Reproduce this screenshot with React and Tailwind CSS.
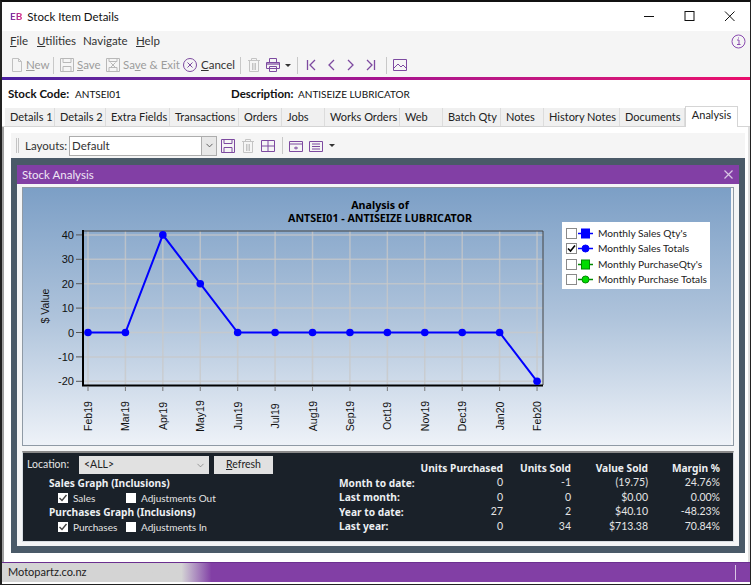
import { ChevronDown } from 'lucide-react';

const tabs = [
  ['Details 1', 'w-[50px]'],
  ['Details 2', 'w-[51px]'],
  ['Extra Fields', 'w-[64px]'],
  ['Transactions', 'w-[69px]'],
  ['Orders', 'w-[43px]'],
  ['Jobs', 'w-[43px]'],
  ['Works Orders', 'w-[75px]'],
  ['Web', 'w-[43px]'],
  ['Batch Qty', 'w-[58px]'],
  ['Notes', 'w-[43px]'],
  ['History Notes', 'w-[76px]'],
  ['Documents', 'w-[65px]'],
];

const months = ['Feb19', 'Mar19', 'Apr19', 'May19', 'Jun19', 'Jul19', 'Aug19', 'Sep19', 'Oct19', 'Nov19', 'Dec19', 'Jan20', 'Feb20'];
const values = [0, 0, 40, 20, 0, 0, 0, 0, 0, 0, 0, 0, -20];

const stats = [
  ['Month to date:', '0', '-1', '(19.75)', '24.76%'],
  ['Last month:', '0', '0', '$0.00', '0.00%'],
  ['Year to date:', '27', '2', '$40.10', '-48.23%'],
  ['Last year:', '0', '34', '$713.38', '70.84%'],
];

const legend = [
  ['Monthly Sales Qty\'s', '#0000ff', 'square', false],
  ['Monthly Sales Totals', '#0000ff', 'circle', true],
  ['Monthly PurchaseQty\'s', '#00dd00', 'square', false],
  ['Monthly Purchase Totals', '#00dd00', 'circle', false],
];

function Icon({ children, className = '', color = '#b5b5b5', w = 16, h = 16 }) {
  return (
    <svg width={w} height={h} viewBox="0 0 16 16" fill="none" stroke={color} strokeWidth="1" className={className}>
      {children}
    </svg>
  );
}

function Sep() {
  return <div className="mx-[3px] h-[17px] w-px bg-[#c8c8c8]" />;
}

function SaveGlyph({ color }) {
  return (
    <Icon color={color}>
      <path d="M1.5 1.5h13v13h-13z" />
      <path d="M4 1.5v4h8v-4M4 14.5v-5h8v5" />
    </Icon>
  );
}

function TrashGlyph({ color = '#c4c4c4' }) {
  return (
    <Icon color={color}>
      <path d="M2 3.5h12M5.5 3V1.5h5V3M3.5 4v10.5h9V4M6.5 6v7M8 6v7M9.5 6v7" />
    </Icon>
  );
}

function Toolbar() {
  const grey = 'whitespace-nowrap text-[#9c9c9c]';
  return (
    <div className="flex h-[26px] items-center pl-[7px] pt-[2px] text-[11.5px]">
      <Icon color="#c0c0c0">
        <path d="M3.5 1.5h6l3 3v10h-9zM9.5 1.5v3h3" />
      </Icon>
      <span className={`ml-[1px] w-[22px] ${grey}`}><u>N</u>ew</span>
      <div className="ml-[2px]"><Sep /></div>
      <div className="ml-[2px]"><SaveGlyph color="#b8b8b8" /></div>
      <span className={`ml-[2px] w-[23px] ${grey}`}><u>S</u>ave</span>
      <div className="ml-[5px]">
        <Icon color="#b8b8b8">
          <path d="M1.5 1.5h13v13h-13z" />
          <path d="M4 1.5v3h8v-3M4 14.5v-4h8v4M5.5 5.5l5 5M10.5 5.5l-5 5" />
        </Icon>
      </div>
      <span className={`ml-[2px] w-[54px] ${grey}`}>Sa<u>v</u>e &amp; Exit</span>
      <div className="ml-[5px]">
        <Icon color="#7d4aa0">
          <circle cx="8" cy="8" r="6.5" />
          <path d="M5.5 5.5l5 5M10.5 5.5l-5 5" />
        </Icon>
      </div>
      <span className="ml-[3px] w-[33px] text-[#333]"><u>C</u>ancel</span>
      <div className="ml-[3px]"><Sep /></div>
      <div className="ml-[2px]"><TrashGlyph /></div>
      <div className="ml-[3px]">
        <Icon color="#7d4aa0">
          <path d="M4.5 5V1.5h7V5M1.5 5.5h13v6h-13zM4.5 9.5h7v5h-7z" fill="#f5f5f5" />
          <path d="M2 6h12v2H2z" fill="#a98abf" stroke="none" />
        </Icon>
      </div>
      <span className="ml-[4px] h-0 w-0 border-x-[3px] border-t-[3px] border-x-transparent border-t-[#333]" />
      <div className="ml-[3px]"><Sep /></div>
      <div className="ml-[2px] flex items-center gap-[4px]">
        <Icon color="#7d4aa0"><path d="M4.5 3v10M12 3L7 8l5 5" strokeWidth="1.3" /></Icon>
        <Icon color="#7d4aa0"><path d="M11 3L6 8l5 5" strokeWidth="1.3" /></Icon>
        <Icon color="#7d4aa0"><path d="M5 3l5 5-5 5" strokeWidth="1.3" /></Icon>
        <Icon color="#7d4aa0"><path d="M11.5 3v10M4 3l5 5-5 5" strokeWidth="1.3" /></Icon>
      </div>
      <div className="ml-[4px]"><Sep /></div>
      <div className="ml-[2px]">
        <Icon color="#7d4aa0">
          <path d="M1.5 2.5h13v11h-13z" />
          <path d="M2 11l4-4 3 3 2-2 3 3" />
        </Icon>
      </div>
    </div>
  );
}

function Chart() {
  const xAt = (i) => 65 + i * 37.42;
  const yAt = (v) => 144.5 - v * 2.44;
  const pts = values.map((v, i) => `${xAt(i)},${yAt(v)}`).join(' ');
  return (
    <svg width="708" height="257" viewBox="0 0 708 257" className="block">
      <defs>
        <linearGradient id="bg" x1="0" y1="0" x2="0" y2="1">
          <stop offset="0" stopColor="#7c9fc6" />
          <stop offset="0.5" stopColor="#aec3db" />
          <stop offset="1" stopColor="#eef2f8" />
        </linearGradient>
      </defs>
      <rect width="708" height="257" fill="url(#bg)" />
      <g fontFamily="'Noto Sans', sans-serif" fontSize="10.7" fontWeight="700" fill="#000" textAnchor="middle">
        <text x="357" y="21">Analysis of</text>
        <text x="357" y="34">ANTSEI01 - ANTISEIZE LUBRICATOR</text>
      </g>
      {months.map((m, i) => (
        <line key={m} x1={xAt(i)} x2={xAt(i)} y1="43" y2="197" stroke="#c8c8c8" strokeOpacity="0.75" strokeWidth="1.5" />
      ))}
      {[40, 30, 20, 10, 0, -10, -20].map((v) => (
        <g key={v}>
          <line x1="60" x2="520" y1={yAt(v)} y2={yAt(v)} stroke="#c8c8c8" strokeOpacity="0.75" strokeWidth="1.5" />
          <line x1="53" x2="60" y1={yAt(v)} y2={yAt(v)} stroke="#555" />
          <text x="51" y={yAt(v) + 4} fontFamily="'Liberation Sans', sans-serif" fontSize="11" textAnchor="end" fill="#111">{v}</text>
        </g>
      ))}
      <path d="M60 43H520V197" fill="none" stroke="#444" strokeWidth="1" />
      <path d="M60 42V197.5H520" fill="none" stroke="#000" strokeWidth="2" />
      {months.map((m, i) => (
        <g key={m}>
          <line x1={xAt(i)} x2={xAt(i)} y1="198" y2="203" stroke="#777" />
          <text
            transform={`translate(${xAt(i) + 4} 228) rotate(-90)`}
            fontFamily="'Liberation Sans', sans-serif"
            fontSize="10.5"
            textAnchor="middle"
            fill="#111"
          >
            {m}
          </text>
        </g>
      ))}
      <text transform="translate(26 118) rotate(-90)" fontFamily="'Liberation Sans', sans-serif" fontSize="10.5" textAnchor="middle" fill="#111">$ Value</text>
      <polyline points={pts} fill="none" stroke="#0000ff" strokeWidth="2" />
      {values.map((v, i) => (
        <circle key={i} cx={xAt(i)} cy={yAt(v)} r="3.8" fill="#0000ff" />
      ))}
    </svg>
  );
}

function Legend() {
  return (
    <div className="absolute left-[539px] top-[34px] flex h-[67px] w-[148px] flex-col justify-center gap-[1.5px] bg-white pl-[4px] pt-[2px] text-[10.2px] text-[#222]">
      {legend.map(([label, color, shape, checked]) => (
        <div key={label} className="flex h-[14px] items-center">
          <span className="flex h-[11px] w-[11px] shrink-0 items-center justify-center border border-[#8a8a8a] bg-white">
            {checked && (
              <svg width="9" height="9" viewBox="0 0 9 9" fill="none" stroke="#000" strokeWidth="1.6">
                <path d="M1 4.5l2.5 2.5L8 1.5" />
              </svg>
            )}
          </span>
          <svg width="15" height="11" viewBox="0 0 15 11" className="ml-[1px] shrink-0">
            <line x1="0" x2="15" y1="5.5" y2="5.5" stroke={color === '#00dd00' ? '#008800' : color} strokeWidth="1.5" />
            {shape === 'square' ? (
              <rect x="3.5" y="1" width="8" height="9" fill={color} stroke={color === '#00dd00' ? '#008800' : color} />
            ) : (
              <circle cx="7.5" cy="5.5" r="3.5" fill={color} stroke={color === '#00dd00' ? '#008800' : color} />
            )}
          </svg>
          <span className="ml-[5px] whitespace-nowrap">{label}</span>
        </div>
      ))}
    </div>
  );
}

function DarkCheck({ checked, label, className = '' }) {
  return (
    <div className={`flex items-center ${className}`}>
      <span className="flex h-[10px] w-[10px] shrink-0 items-center justify-center bg-white">
        {checked && (
          <svg width="10" height="10" viewBox="0 0 10 10" fill="none" stroke="#444" strokeWidth="1.4">
            <path d="M1.5 5l2.5 2.5L8.5 2" />
          </svg>
        )}
      </span>
      <span className="ml-[5px] whitespace-nowrap text-[10px] text-[#e4e4e4]">{label}</span>
    </div>
  );
}

function BottomPanel() {
  const bold = "font-['Noto_Sans',sans-serif] text-[10.2px] font-bold text-[#eceff2] whitespace-nowrap";
  return (
    <div className="mt-[5px] flex h-[91px] border border-t-2 border-[#d8dde2] border-t-[#8a8a8a] bg-[#1a2129]">
      <div className="w-[316px] shrink-0 pl-[4px] pt-[3px]">
        <div className="flex h-[18px] items-center">
          <span className="w-[52px] text-[10.5px] text-[#e4e4e4]">Location:</span>
          <div className="flex h-[18px] w-[130px] items-center justify-between bg-[#e1e1e1] pl-[5px] pr-[3px] text-[10.5px] text-[#222]">
            <span>&lt;ALL&gt;</span>
            <ChevronDown size={11} strokeWidth={1} color="#444" />
          </div>
          <button className="ml-[5px] h-[18px] w-[59px] bg-[#e1e1e1] text-[10.5px] text-[#222]"><u>R</u>efresh</button>
        </div>
        <div className={`ml-[22px] mt-[2px] h-[15px] leading-[15px] ${bold}`}>Sales Graph (Inclusions)</div>
        <div className="ml-[31px] flex h-[14px] items-center">
          <DarkCheck checked label="Sales" className="w-[68px]" />
          <DarkCheck label="Adjustments Out" />
        </div>
        <div className={`ml-[22px] h-[15px] leading-[15px] ${bold}`}>Purchases Graph (Inclusions)</div>
        <div className="ml-[31px] flex h-[14px] items-center">
          <DarkCheck checked label="Purchases" className="w-[68px]" />
          <DarkCheck label="Adjustments In" />
        </div>
      </div>
      <div className="pt-[8.5px]">
        <div className="grid grid-cols-[78px_86px_68px_77px_72px] auto-rows-[14.5px] items-center">
          <span />
          <span className={`text-right ${bold}`}>Units Purchased</span>
          <span className={`text-right ${bold}`}>Units Sold</span>
          <span className={`text-right ${bold}`}>Value Sold</span>
          <span className={`text-right ${bold}`}>Margin %</span>
          {stats.map((row) =>
            row.map((cell, i) => (
              <span
                key={row[0] + i}
                className={i === 0 ? bold : 'whitespace-nowrap text-right text-[10.5px] text-[#e4e4e4]'}
              >
                {cell}
              </span>
            )),
          )}
        </div>
      </div>
    </div>
  );
}

export default function App() {
  return (
    <div className="h-[585px] w-[753px] overflow-hidden bg-white font-['Lato',sans-serif] text-[11px] text-[#222]">
      <div className="flex h-[585px] w-[751px] flex-col border-2 border-b-1 border-r-1 border-[#222] border-t-[#111]">
        {/* title bar */}
        <div className="flex h-[29px] shrink-0 items-center bg-white pl-[8px]">
          <span className="bg-gradient-to-r from-[#6b2fa8] to-[#d6127f] bg-clip-text text-[10px] font-bold text-transparent">EB</span>
          <span className="ml-[5px] text-[11.5px] text-[#111]">Stock Item Details</span>
          <div className="ml-auto flex items-center gap-[29px] pr-[15px]">
            <svg width="11" height="11" viewBox="0 0 11 11" stroke="#111"><line x1="0" x2="10" y1="5.5" y2="5.5" /></svg>
            <svg width="11" height="11" viewBox="0 0 11 11" fill="none" stroke="#111"><rect x="1" y="0.5" width="9" height="9" /></svg>
            <svg width="11" height="11" viewBox="0 0 11 11" stroke="#111"><path d="M1 0.5l9.5 9.5M10.5 0.5l-9.5 9.5" /></svg>
          </div>
        </div>
        {/* menu + toolbar */}
        <div className="h-[46px] shrink-0 bg-[#f5f5f5]">
          <div className="flex h-[20px] items-center pl-[8px] text-[11.5px] text-[#333]">
            <span className="w-[27px]"><u>F</u>ile</span>
            <span className="w-[46px]"><u>U</u>tilities</span>
            <span className="w-[53px]">Navigate</span>
            <span><u>H</u>elp</span>
            <svg width="15" height="15" viewBox="0 0 15 15" fill="none" stroke="#8a4bb0" className="ml-auto mr-[4px]">
              <circle cx="7.5" cy="7.5" r="6.5" />
              <path d="M6 6h2v4.5M6 10.5h3.5M7.5 3.5v1" />
            </svg>
          </div>
          <Toolbar />
        </div>
        <div className="h-[3px] shrink-0 bg-gradient-to-r from-[#4a1fa0] via-[#a6128f] to-[#ea0d6c]" />
        {/* stock code */}
        <div className="flex h-[28px] shrink-0 items-center whitespace-nowrap pl-[6px] text-[11.5px] text-[#111]">
          <b className="w-[67px]">Stock Code:</b>
          <span className="w-[156px] text-[10px]">ANTSEI01</span>
          <b className="w-[67px]">Description:</b>
          <span className="text-[10px]">ANTISEIZE LUBRICATOR</span>
        </div>
        {/* tabs */}
        <div className="flex h-[19px] shrink-0 items-end border-b border-[#d5d5d5] pl-[3px] text-[11px] text-[#222]">
          {tabs.map(([t, w]) => (
            <div key={t} className={`flex h-[18px] items-center whitespace-nowrap border-r border-[#dcdcdc] bg-[#f0f0f0] pl-[5px] ${w}`}>
              {t}
            </div>
          ))}
          <div className="relative top-[1px] flex h-[21px] w-[53px] items-center justify-center border-x border-t border-[#d5d5d5] bg-white pb-[3px]">
            Analysis
          </div>
        </div>
        {/* tab body */}
        <div className="flex min-h-0 flex-1 flex-col border-x-2 border-[#a0a0a0] border-r-[#e0e0e0] pl-[7px] pr-[3px] pt-[6px]">
          <div className="flex h-[25px] shrink-0 items-center bg-[#f5f5f5] pl-[5px] text-[11.5px] text-[#333]">
            <div className="h-[15px] w-[3px] border-x border-[#c4c4c4]" />
            <span className="ml-[6px] w-[44px]">Layouts:</span>
            <div className="flex h-[20px] w-[148px] items-center justify-between border border-[#adadad] bg-white pl-[2px]">
              <span>Default</span>
              <span className="flex h-full w-[15px] items-center justify-center border-l border-[#adadad] bg-[#e8e8e8]">
                <ChevronDown size={11} color="#555" />
              </span>
            </div>
            <div className="ml-[3px]"><SaveGlyph color="#7d4aa0" /></div>
            <div className="ml-[4px]"><TrashGlyph /></div>
            <div className="ml-[4px]">
              <Icon color="#7d4aa0"><path d="M1.5 2.5h13v11h-13zM8 2.5v11M1.5 8h13" /></Icon>
            </div>
            <div className="ml-[3px]"><Sep /></div>
            <div className="ml-[2px]">
              <Icon color="#7d4aa0"><path d="M1.5 3.5h13v10h-13zM1.5 6h13M6 10h4M8 8.5v3" /></Icon>
            </div>
            <div className="ml-[4px]">
              <Icon color="#7d4aa0"><path d="M1.5 3.5h13v10h-13zM4 6h8M4 8.5h8M4 11h8" /></Icon>
            </div>
            <span className="ml-[5px] h-0 w-0 border-x-[3px] border-t-[3px] border-x-transparent border-t-[#333]" />
          </div>
          {/* analysis window */}
          <div className="h-[395px] shrink-0 bg-[#4a5a68] px-[6px] pt-[7px]">
            <div className="flex h-[19px] items-center justify-between bg-[#823fa5] pl-[5px] pr-[6px] text-[11.5px] text-[#f0e6f5]">
              <span>Stock Analysis</span>
              <svg width="9" height="9" viewBox="0 0 9 9" stroke="#d9c6e4" strokeWidth="1.2"><path d="M0.5 0.5l8 8M8.5 0.5l-8 8" /></svg>
            </div>
            <div className="h-[362px] bg-[#f4f5f6] px-[5px] pt-[3px]">
              <div className="relative border border-[#8f9aa5]">
                <Chart />
                <Legend />
              </div>
              <BottomPanel />
            </div>
          </div>
        </div>
        {/* status bar */}
        <div className="flex h-[20px] shrink-0 items-center border-t border-[#6b2f90] bg-gradient-to-r from-[#d4d4d4] from-[24%] to-[#823fa5] to-[28%] pl-[6px] text-[11px] text-[#222]">
          Motopartz.co.nz
          <span className="ml-auto mr-[14px] h-[15px] w-px bg-[#d9c6e4]" />
        </div>
        <div className="h-[2px] shrink-0 bg-white" />
      </div>
    </div>
  );
}
